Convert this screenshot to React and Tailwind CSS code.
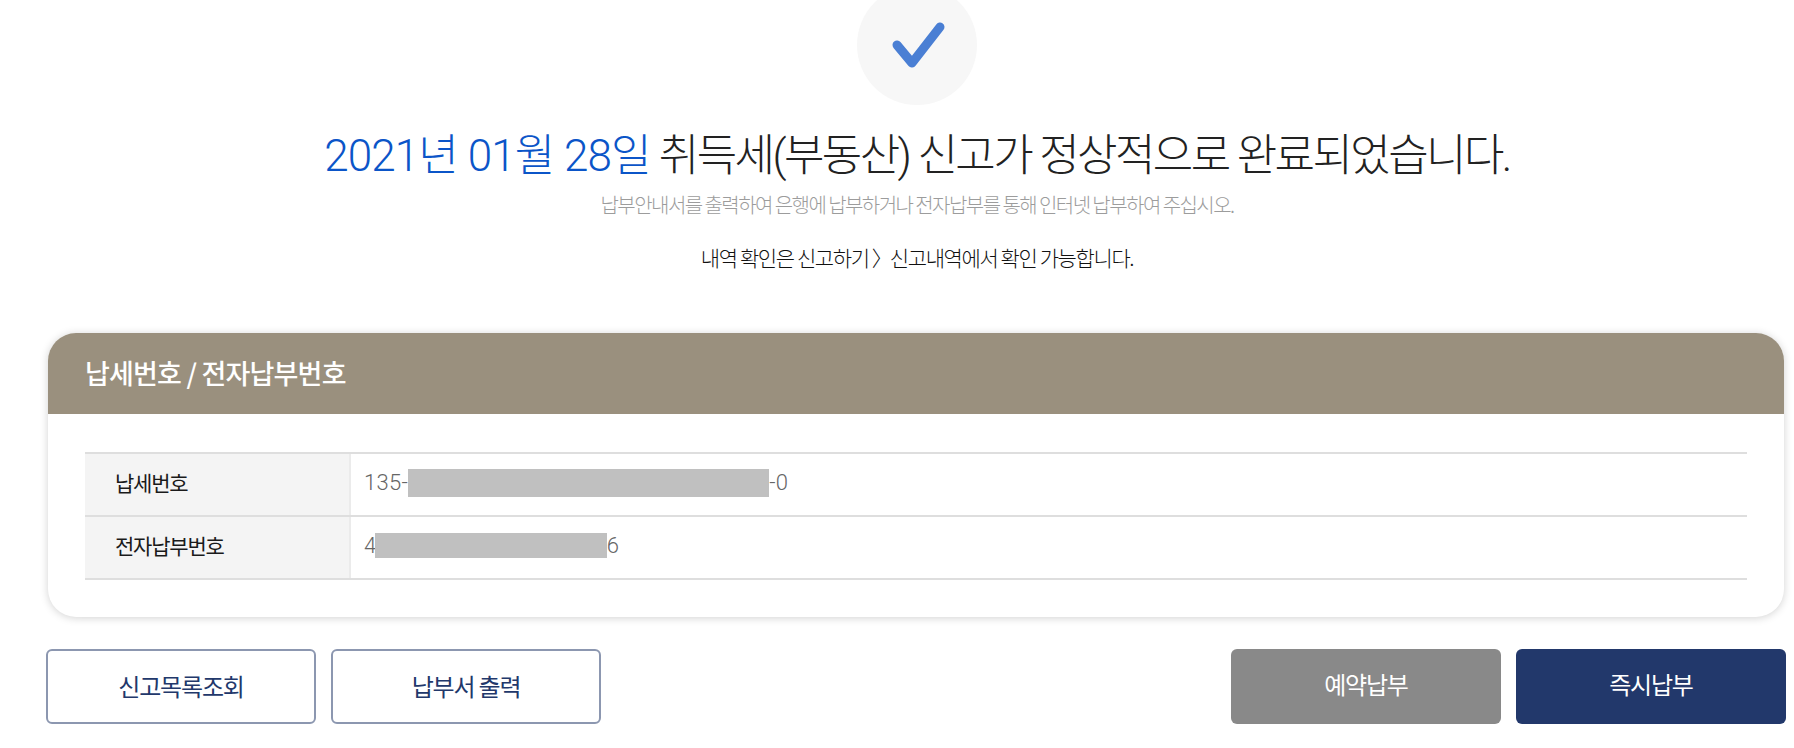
function Row({ label, children }) {
  return (
    <div className="flex h-[63px] border-b-2 border-[#dedede]">
      <div className="flex w-[266px] items-center border-r-2 border-[#ebebeb] bg-[#f4f4f4] pb-[4px] pl-[30px] text-[21px] font-normal tracking-[-1.2px] text-[#1a1a1a]">
        {label}
      </div>
      <div className="flex flex-1 items-center pb-[4px] pl-[13px] font-['Roboto','Noto_Sans_CJK_KR',sans-serif] text-[22px] font-light tracking-[0.3px] text-[#666]">
        {children}
      </div>
    </div>
  );
}

const outline = "h-[75px] w-[270px] rounded-[6px] border-2 border-[#8c97b0] bg-white pb-[2px] text-[24px] tracking-[-1.2px] text-[#22386b]";
const solid = "h-[75px] w-[270px] rounded-[6px] pb-[5px] text-[24px] tracking-[-1.2px] text-white";

export default function App() {
  return (
    <div className="h-[748px] overflow-hidden bg-white font-['Noto_Sans_CJK_KR',sans-serif]">
      <div className="ml-[46px] w-[1740px]">
        {/* Done message */}
        <div className="-mt-[15px] flex flex-col items-center pl-[2px]">
          <div className="flex h-[120px] w-[120px] items-center justify-center rounded-full bg-[#f7f7f7]">
            <svg width="60" height="60" viewBox="0 0 60 60" fill="none" stroke="#4a7fd4" strokeWidth="9" strokeLinecap="round" strokeLinejoin="round">
              <path d="M10 30l15 18L53 12" />
            </svg>
          </div>
          <h1 className="mt-[19px] font-['Roboto','Noto_Sans_CJK_KR',sans-serif] text-[44px] font-light leading-[64px] tracking-[-2.6px] text-[#222]">
            <span className="tracking-[-0.9px] text-[#0b55c8]">2021년 01월 28일</span> 취득세(부동산) 신고가 정상적으로 완료되었습니다.
          </h1>
          <p className="mt-[2px] text-[20px] font-light leading-[30px] tracking-[-1.55px] text-[#9c9c9c]">
            납부안내서를 출력하여 은행에 납부하거나 전자납부를 통해 인터넷 납부하여 주십시오.
          </p>
          <p className="mt-[22px] text-[21px] font-light leading-[30px] tracking-[-1.4px] text-[#111]">
            내역 확인은 신고하기 <span className="tracking-[-3px]">〉</span>신고내역에서 확인 가능합니다.
          </p>
        </div>

        {/* Number card */}
        <div className="mx-[2px] mt-[61px] overflow-hidden rounded-[28px] bg-white shadow-[0_1px_8px_rgba(0,0,0,0.18)]">
          <div className="flex h-[81px] items-center bg-[#9a907e] pl-[37px] text-[27px] font-medium tracking-[-0.8px] text-white">
            납세번호 / 전자납부번호
          </div>
          <div className="px-[37px] pb-[37px] pt-[38px]">
            <div className="border-t-2 border-[#dedede]">
              <Row label="납세번호">
                <span>135-</span>
                <span className="h-[28px] w-[361px] bg-[#c0c0c0]" />
                <span>-0</span>
              </Row>
              <Row label="전자납부번호">
                <span className="tracking-[-1.5px]">4</span>
                <span className="h-[25px] w-[232px] bg-[#c0c0c0]" />
                <span>6</span>
              </Row>
            </div>
          </div>
        </div>

        {/* Actions */}
        <div className="mt-[32px] flex justify-between">
          <div className="flex gap-[15px]">
            <button className={outline}>신고목록조회</button>
            <button className={outline}>납부서 출력</button>
          </div>
          <div className="flex gap-[15px]">
            <button className={`${solid} bg-[#898989]`}>예약납부</button>
            <button className={`${solid} bg-[#22386b]`}>즉시납부</button>
          </div>
        </div>
      </div>
    </div>
  );
}
